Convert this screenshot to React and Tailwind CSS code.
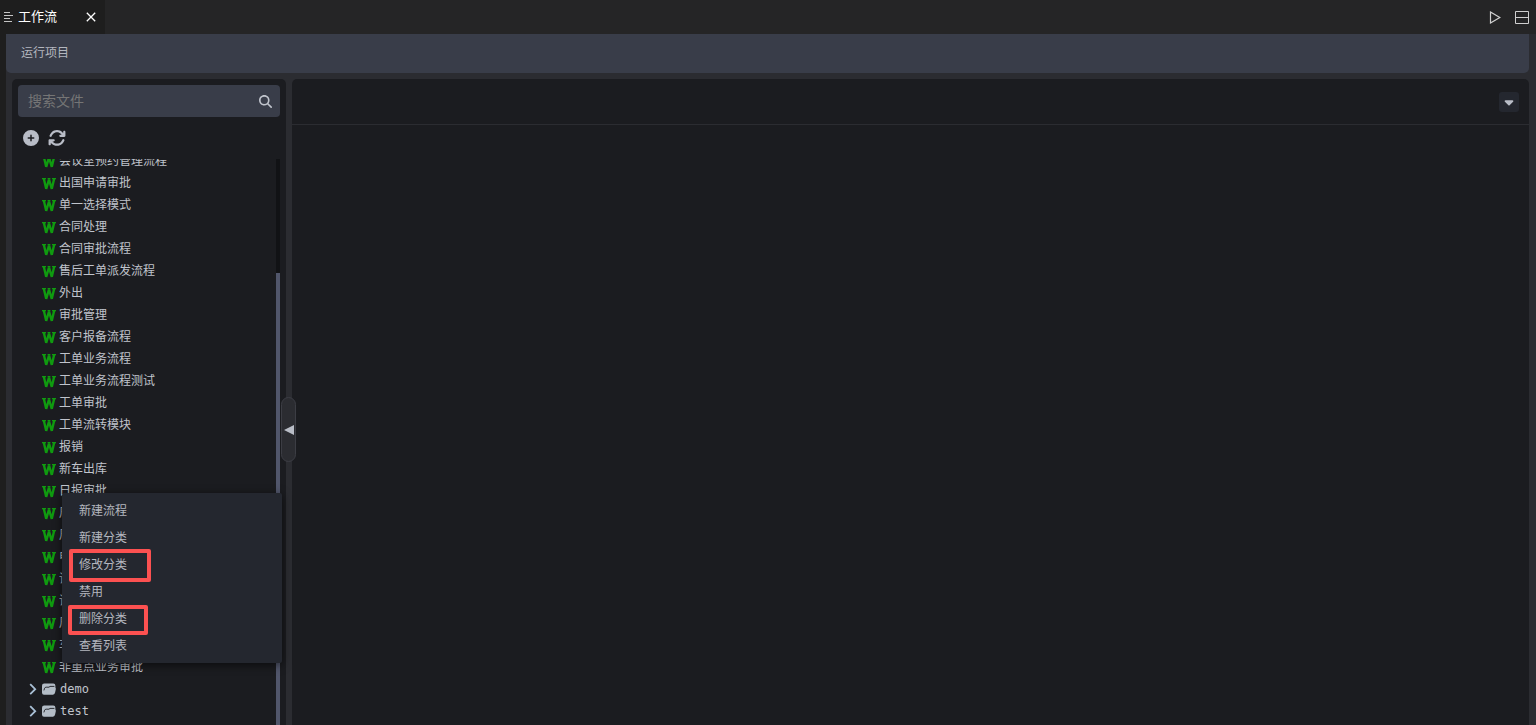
import { FaArrowsRotate, FaCaretDown, FaCirclePlus, FaMagnifyingGlass } from "react-icons/fa6";

const FLOWS = [
  "会议室预约管理流程",
  "出国申请审批",
  "单一选择模式",
  "合同处理",
  "合同审批流程",
  "售后工单派发流程",
  "外出",
  "审批管理",
  "客户报备流程",
  "工单业务流程",
  "工单业务流程测试",
  "工单审批",
  "工单流转模块",
  "报销",
  "新车出库",
  "日报审批",
  "周",
  "周",
  "电",
  "请",
  "请",
  "周",
  "车",
  "非重点业务审批",
];

const FOLDERS = ["demo", "test"];

const MENU = [
  { label: "新建流程" },
  { label: "新建分类" },
  { label: "修改分类", mark: "-left-[10px] -top-[2px] h-[33px] w-[82px]" },
  { label: "禁用" },
  { label: "删除分类", mark: "-left-[11px] top-0 h-[30px] w-[80px]" },
  { label: "查看列表" },
];

function FlowIcon() {
  return (
    <svg viewBox="0 0 14 13" className="h-[13px] w-[14px] shrink-0" fill="none" stroke="#109a10">
      <path d="M1.8 1.5 4.2 11.8 7 2.5 9.8 11.8 12.2 1.5" strokeWidth="2.4" strokeLinejoin="bevel" />
      <path d="M0 1.6H4M5.6 1.6H8.4M10 1.6H14" strokeWidth="1.2" />
    </svg>
  );
}

function FolderIcon() {
  return (
    <svg viewBox="0 0 14 12" className="h-3 w-3.5 shrink-0">
      <path
        d="M2.2 .5H11.3Q13.4 .5 13.4 2.8V4.4Q14 5 13.8 6.2L13.1 9.6Q12.7 11.7 11 11.7H2Q0 11.7 0 9.7V2.7Q0 .5 2.2 .5Z"
        fill="#b3bcc6"
      />
      <path d="M1.9 7.4 2.6 5.2Q3 4.2 4.2 4.2H7L8 3.4H12.4" fill="none" stroke="#1b1c20" strokeWidth=".9" />
    </svg>
  );
}

function TabBar() {
  return (
    <header className="flex h-[34px] shrink-0 items-center justify-between bg-[#252526]">
      <div className="flex h-full w-[105px] items-center bg-[#1e1e1e] pl-[3px] text-white">
        <svg viewBox="0 0 10 10" className="h-2.5 w-2.5" stroke="#c5c5c5">
          <path d="M1 .5H7M1 3.5H10M1 6.5H7M1 9.5H9" />
        </svg>
        <span className="ml-[5px] pb-0.5 text-[13px]">工作流</span>
        <button aria-label="关闭" className="ml-auto mr-[9px]">
          <svg viewBox="0 0 10 10" className="h-2.5 w-2.5" stroke="currentColor" strokeWidth="1.3">
            <path d="M.8 .8 9.2 9.2M9.2 .8 .8 9.2" />
          </svg>
        </button>
      </div>
      <div className="flex items-center gap-3.5 pr-[7px] text-[#d0d0d0]">
        <button aria-label="运行">
          <svg viewBox="0 0 12 13" className="h-[13px] w-3" fill="none" stroke="currentColor" strokeWidth="1.2">
            <path d="M1.5 1V12L10.8 6.5Z" />
          </svg>
        </button>
        <button aria-label="拆分">
          <svg viewBox="0 0 14 13" className="h-[13px] w-3.5" fill="none" stroke="currentColor">
            <path d="M.5 .5H13.5V12.5H.5ZM.5 6.5H13.5" />
          </svg>
        </button>
      </div>
    </header>
  );
}

function ContextMenu() {
  return (
    <ul className="absolute left-[50px] top-[414px] z-20 w-[220px] rounded-[2px] bg-[#24272f] py-1 text-[#b4b7bf] shadow-[0_2px_10px_rgba(0,0,0,0.6)]">
      {MENU.map((item) => (
        <li key={item.label} className="h-[27px] pl-[17px]">
          <button className="relative block h-[27px] w-full pb-0.5 text-left">
            {item.label}
            {item.mark && (
              <span className={`absolute rounded-[2px] border-4 border-[#fc5151] ${item.mark}`} />
            )}
          </button>
        </li>
      ))}
    </ul>
  );
}

function Sidebar() {
  return (
    <aside className="relative flex w-[274px] shrink-0 flex-col rounded-t-[5px] bg-[#1b1c20] pt-1.5">
      <label className="mx-1.5 flex h-8 shrink-0 items-center rounded bg-[#393d49] pl-2.5 pr-2">
        <input
          type="text"
          aria-label="搜索文件"
          placeholder="搜索文件"
          className="min-w-0 flex-1 bg-transparent pb-0.5 text-[14px] text-[#c0c4cc] outline-none placeholder:text-[#757575]"
        />
        <FaMagnifyingGlass className="size-[13px] text-[#c0c4cc]" />
      </label>
      <div className="flex h-[42px] shrink-0 items-center gap-[9px] pl-[11px] text-[#b9bdc7]">
        <button aria-label="新建">
          <FaCirclePlus className="size-4" />
        </button>
        <button aria-label="刷新">
          <FaArrowsRotate className="size-[18px]" />
        </button>
      </div>
      <div className="flex min-h-0 flex-1">
        <nav className="min-w-0 flex-1 overflow-hidden">
          {/* list is scrolled, the first row sits partly under the toolbar */}
          <ul className="-mt-[9px] text-[#c0c4cc]">
            {FLOWS.map((name, i) => (
              <li key={i}>
                <a href="#" className="flex h-[22px] items-center gap-[3px] whitespace-nowrap pl-[30px]">
                  <FlowIcon />
                  <span className="pb-0.5">{name}</span>
                </a>
              </li>
            ))}
            {FOLDERS.map((name) => (
              <li key={name}>
                <a href="#" className="flex h-[22px] items-center pl-[17px] font-[DejaVu_Sans_Mono,monospace]">
                  <svg viewBox="0 0 8 12" className="mr-[5px] h-3 w-2" fill="none" stroke="#a9c0d6" strokeWidth="1.8">
                    <path d="M1.2 1.2 6.2 6.2 1.2 11.2" />
                  </svg>
                  <FolderIcon />
                  <span className="ml-1">{name}</span>
                </a>
              </li>
            ))}
          </ul>
        </nav>
        <div className="mr-1.5 w-1 bg-[#111215] pt-[114px]">
          <div className="h-full bg-[#51566b]" />
        </div>
      </div>
      <ContextMenu />
    </aside>
  );
}

export default function App() {
  return (
    <div className="flex h-screen flex-col overflow-hidden bg-[#1e1e1e] font-['Noto_Sans_CJK_SC',sans-serif] text-[12px]">
      <TabBar />
      <div className="ml-1.5 flex min-h-0 flex-1 flex-col bg-[#2b2c31] pr-[7px]">
        <div className="flex h-[39px] shrink-0 items-center rounded-b-[5px] bg-[#393d49] pb-1 pl-[15px] text-[#b4b7bf]">
          <button>运行项目</button>
        </div>
        <div className="mt-1.5 flex min-h-0 flex-1 pl-1.5">
          <Sidebar />
          <div className="relative w-1.5 shrink-0">
            <button
              aria-label="收起"
              className="absolute -left-[5px] top-[318px] z-10 flex h-[65px] w-[15px] items-center justify-center rounded-full border border-[#3c3d44] bg-[#2b2c31]"
            >
              <svg viewBox="0 0 10 10" className="h-2.5 w-2.5">
                <path d="M0 5 10 0V10Z" fill="#b9bdc7" />
              </svg>
            </button>
          </div>
          <main className="min-w-0 flex-1 rounded-t-[5px] bg-[#1b1c20]">
            <div className="flex h-[46px] items-center justify-end border-b border-[#2b2c31] pr-2.5">
              <button aria-label="更多" className="flex size-5 items-center justify-center rounded-[3px] bg-[#24272f]">
                <FaCaretDown className="size-3.5 text-[#b9bdc7]" />
              </button>
            </div>
          </main>
        </div>
      </div>
    </div>
  );
}
